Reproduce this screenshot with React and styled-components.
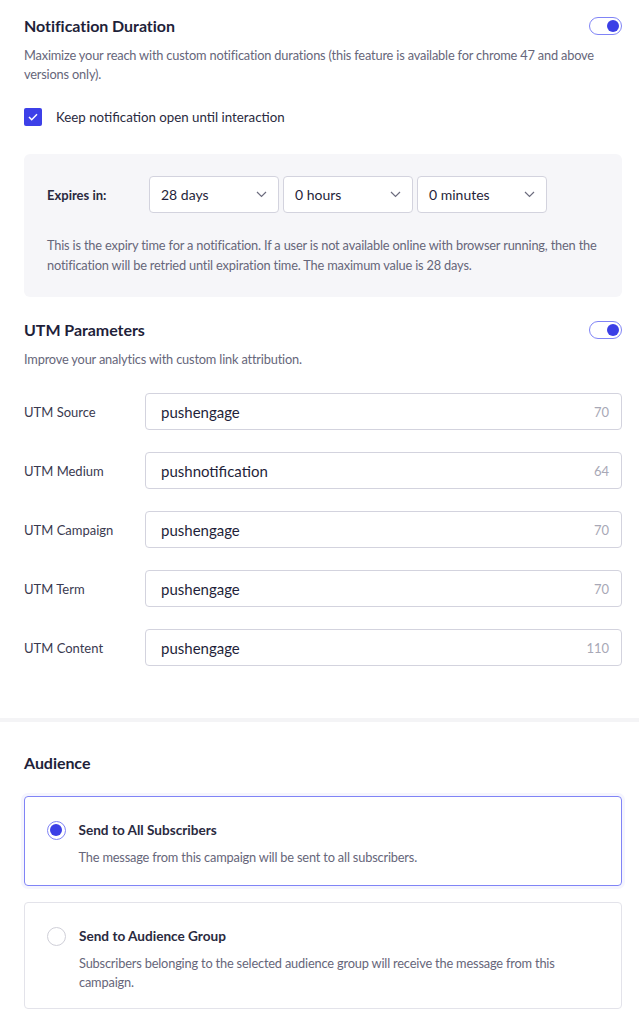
import styled, { createGlobalStyle } from 'styled-components';

const GlobalStyle = createGlobalStyle`
  body {
    margin: 0;
    background: #fff;
    font-family: Lato, "Open Sans", sans-serif;
    color: #1f1f3a;
  }
`;

const Page = styled.div`
  width: 639px;
`;

const Section = styled.section`
  padding: 14px 17px 52px 24px;
`;

const AudienceSection = styled.section`
  padding: 29px 17px 0 24px;
`;

const Divider = styled.div`
  height: 4px;
  background: #f4f4f6;
`;

const HeaderRow = styled.div`
  display: flex;
  align-items: center;
  justify-content: space-between;
  height: 24px;
  margin-top: ${(p) => p.$top || 0}px;
`;

const Title = styled.h2`
  margin: 0 0 2px;
  font-size: 16px;
  font-weight: 700;
  letter-spacing: -0.05px;
  color: #1f1f3a;
`;

const Toggle = styled.div`
  box-sizing: border-box;
  width: 33px;
  height: 18px;
  border: 1.5px solid #8084f6;
  border-radius: 9px;
  display: flex;
  align-items: center;
  justify-content: flex-end;
  padding-right: 2px;

  &::after {
    content: '';
    width: 12px;
    height: 12px;
    border-radius: 50%;
    background: #3b3fe6;
  }
`;

const Desc = styled.p`
  margin: ${(p) => p.$top || 8}px 0 0;
  font-size: 12.8px;
  letter-spacing: -0.18px;
  line-height: 19px;
  color: #66667a;
`;

const CheckRow = styled.label`
  display: flex;
  align-items: center;
  gap: 14px;
  margin-top: 24px;
  font-size: 13.3px;
  color: #2a2a40;
`;

const CheckBox = styled.span`
  width: 18px;
  height: 18px;
  border-radius: 2px;
  background: #3d40e8;
  display: flex;
  align-items: center;
  justify-content: center;
`;

const Panel = styled.div`
  margin-top: 28px;
  background: #f6f6f9;
  border-radius: 6px;
  padding: 22px 23px 22px;
`;

const ExpiresRow = styled.div`
  display: flex;
  align-items: center;
  gap: 4px;
`;

const ExpiresLabel = styled.span`
  width: 98px;
  font-size: 13px;
  font-weight: 700;
  color: #2a2a40;
`;

const Select = styled.div`
  box-sizing: border-box;
  width: 130px;
  height: 37px;
  background: #fff;
  border: 1px solid #d3d3de;
  border-radius: 4px;
  display: flex;
  align-items: center;
  justify-content: space-between;
  padding: 0 11px;
  font-size: 14px;
  color: #1f1f3a;
`;

const PanelHelp = styled.p`
  margin: 22px 0 0;
  font-size: 12.8px;
  letter-spacing: -0.18px;
  line-height: 20px;
  color: #66667a;
`;

const UtmList = styled.div`
  display: flex;
  flex-direction: column;
  gap: 22px;
  margin-top: 24px;
`;

const UtmRow = styled.div`
  display: flex;
  align-items: center;
`;

const UtmLabel = styled.span`
  width: 121px;
  font-size: 13px;
  color: #3a3a50;
`;

const UtmInput = styled.div`
  box-sizing: border-box;
  flex: 1;
  height: 37px;
  border: 1px solid #d3d3de;
  border-radius: 4px;
  display: flex;
  align-items: center;
  justify-content: space-between;
  padding: 0 12px 0 15px;
  font-size: 15px;
  color: #1f1f3a;
`;

const Count = styled.span`
  font-size: 13px;
  color: #a8a8b6;
`;

const CardList = styled.div`
  display: flex;
  flex-direction: column;
  gap: 16px;
  margin-top: 21px;
`;

const Card = styled.div`
  border: ${(p) => (p.$active ? '1.5px solid #8084f6' : '1px solid #e3e3ea')};
  border-radius: 4px;
  padding: ${(p) => (p.$active ? '23px 22px 18px 21.5px' : '23px 22px 16px 22px')};
  box-shadow: ${(p) => (p.$active ? '0 0 0 3px rgba(128, 132, 246, 0.08)' : 'none')};
`;

const CardHead = styled.div`
  display: flex;
  align-items: center;
  gap: 13px;
`;

const Radio = styled.span`
  box-sizing: border-box;
  width: 19px;
  height: 19px;
  border-radius: 50%;
  border: ${(p) => (p.$on ? '1.5px solid #8084f6' : '1px solid #cfcfd8')};
  display: flex;
  align-items: center;
  justify-content: center;

  &::after {
    content: '';
    display: ${(p) => (p.$on ? 'block' : 'none')};
    width: 12px;
    height: 12px;
    border-radius: 50%;
    background: #3b3fe6;
  }
`;

const CardTitle = styled.span`
  font-size: 13.6px;
  font-weight: 700;
  line-height: 20px;
  color: #2a2a40;
`;

const CardDesc = styled.p`
  margin: 8px 0 0 32px;
  font-size: 12.8px;
  letter-spacing: -0.18px;
  line-height: 19px;
  color: #66667a;
`;

const Chevron = () => (
  <svg width="11" height="7" viewBox="0 0 11 7" fill="none">
    <path d="M1 1l4.5 4.5L10 1" stroke="#6c6c7e" strokeWidth="1.2" />
  </svg>
);

const utmFields = [
  { label: 'UTM Source', value: 'pushengage', count: 70 },
  { label: 'UTM Medium', value: 'pushnotification', count: 64 },
  { label: 'UTM Campaign', value: 'pushengage', count: 70 },
  { label: 'UTM Term', value: 'pushengage', count: 70 },
  { label: 'UTM Content', value: 'pushengage', count: 110 },
];

const audiences = [
  {
    title: 'Send to All Subscribers',
    desc: 'The message from this campaign will be sent to all subscribers.',
    active: true,
  },
  {
    title: 'Send to Audience Group',
    desc: 'Subscribers belonging to the selected audience group will receive the message from this campaign.',
    active: false,
  },
];

const App = () => {
  return (
    <Page>
      <GlobalStyle />
      <Section>
        <HeaderRow>
          <Title>Notification Duration</Title>
          <Toggle />
        </HeaderRow>
        <Desc>
          Maximize your reach with custom notification durations (this feature is available for chrome 47 and above
          versions only).
        </Desc>
        <CheckRow>
          <CheckBox>
            <svg width="10" height="8" viewBox="0 0 10 8" fill="none">
              <path d="M1 4l2.7 2.7L9 1.3" stroke="#fff" strokeWidth="1.5" />
            </svg>
          </CheckBox>
          Keep notification open until interaction
        </CheckRow>
        <Panel>
          <ExpiresRow>
            <ExpiresLabel>Expires in:</ExpiresLabel>
            <Select>28 days<Chevron /></Select>
            <Select>0 hours<Chevron /></Select>
            <Select>0 minutes<Chevron /></Select>
          </ExpiresRow>
          <PanelHelp>
            This is the expiry time for a notification. If a user is not available online with browser running, then the
            notification will be retried until expiration time. The maximum value is 28 days.
          </PanelHelp>
        </Panel>

        <HeaderRow $top={21}>
          <Title>UTM Parameters</Title>
          <Toggle />
        </HeaderRow>
        <Desc>Improve your analytics with custom link attribution.</Desc>
        <UtmList>
          {utmFields.map((f) => (
            <UtmRow key={f.label}>
              <UtmLabel>{f.label}</UtmLabel>
              <UtmInput>
                {f.value}
                <Count>{f.count}</Count>
              </UtmInput>
            </UtmRow>
          ))}
        </UtmList>
      </Section>
      <Divider />
      <AudienceSection>
        <HeaderRow>
          <Title>Audience</Title>
        </HeaderRow>
        <CardList>
          {audiences.map((a) => (
            <Card key={a.title} $active={a.active}>
              <CardHead>
                <Radio $on={a.active} />
                <CardTitle>{a.title}</CardTitle>
              </CardHead>
              <CardDesc>{a.desc}</CardDesc>
            </Card>
          ))}
        </CardList>
      </AudienceSection>
    </Page>
  );
};

export default App;
